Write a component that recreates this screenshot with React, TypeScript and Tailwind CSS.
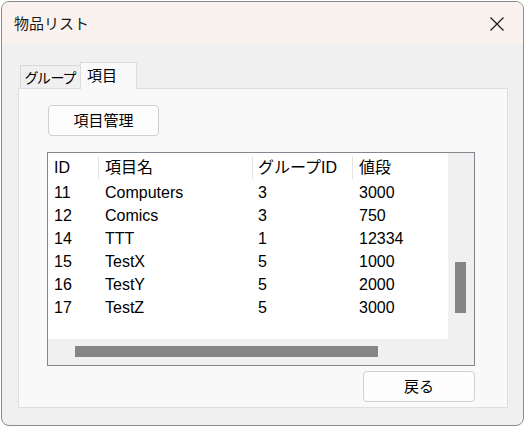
import React from 'react';

const rows = [
  { id: '11', name: 'Computers', group: '3', price: '3000' },
  { id: '12', name: 'Comics', group: '3', price: '750' },
  { id: '14', name: 'TTT', group: '1', price: '12334' },
  { id: '15', name: 'TestX', group: '5', price: '1000' },
  { id: '16', name: 'TestY', group: '5', price: '2000' },
  { id: '17', name: 'TestZ', group: '5', price: '3000' },
];

function Sep({ show }: { show: boolean }) {
  return <div className={`w-px h-[23px] shrink-0 ${show ? 'bg-[#e5e5e5]' : ''}`} />;
}

function Row({ cells, header }: { cells: string[]; header?: boolean }) {
  return (
    <div className={`flex items-center ${header ? 'h-[27px]' : 'h-[23px]'} whitespace-nowrap`}>
      <div className="w-[50px] shrink-0 pl-[6px]">{cells[0]}</div>
      <Sep show={!!header} />
      <div className="w-[153px] shrink-0 pl-[6px]">{cells[1]}</div>
      <Sep show={!!header} />
      <div className="w-[99px] shrink-0 pl-[5px]">{cells[2]}</div>
      <Sep show={!!header} />
      <div className="w-[120px] shrink-0 pl-[6px]">{cells[3]}</div>
    </div>
  );
}

export default function App() {
  return (
    <div
      className="w-[526px] h-[427px] bg-white pt-px pl-px text-black"
      style={{ fontFamily: '"Liberation Sans", "Noto Sans CJK JP", sans-serif' }}
    >
      <div className="w-[523px] h-[425px] border border-[#8c8c8c] rounded-[8px] overflow-hidden flex flex-col bg-[#f0f0f0]">
        {/* title bar */}
        <div className="h-[42px] shrink-0 bg-[#faf2ee] flex items-center justify-between pl-[12px] pr-[18px]">
          <span className="text-[15px] text-[#1a1a1a] font-['Noto_Sans_CJK_JP',sans-serif]">物品リスト</span>
          <svg width="16" height="16" viewBox="0 0 16 16" className="mt-[1px]">
            <path d="M1.5 1.5 L14.5 14.5 M14.5 1.5 L1.5 14.5" stroke="#1a1a1a" strokeWidth="1.2" fill="none" />
          </svg>
        </div>

        {/* body */}
        <div className="flex-1 flex flex-col pt-[18px] px-[16px] pb-[17px]">
          <div className="h-[26px] flex items-end shrink-0 font-['Noto_Sans_CJK_JP',sans-serif]">
            <div className="ml-[2px] w-[60px] h-[23px] border-t border-l border-[#d9d9d9] flex items-center justify-center text-[14px] [font-feature-settings:'palt']">
              グループ
            </div>
            <div className="relative z-10 -mb-px w-[57px] h-[27px] border border-b-0 border-[#dcdcdc] bg-[#f9f9f9] flex items-start pt-[1px] pl-[6px] text-[15px]">
              項目
            </div>
          </div>

          <div className="flex-1 w-[490px] border border-[#dfdfdf] bg-[#f9f9f9] pl-[28px] pt-[16px]">
            <div className="w-[428px] flex flex-col">
              <button className="ml-px w-[111px] h-[31px] border border-[#d0d0d0] rounded-[4px] bg-[#fdfdfd] text-[15px] font-['Noto_Sans_CJK_JP',sans-serif]">
                項目管理
              </button>

              <div className="mt-[16px] h-[214px] border border-[#828790] bg-white flex flex-col text-[16px]">
                <div className="flex h-[186px]">
                  <div className="flex-1 overflow-hidden pt-px">
                    <Row header cells={['ID', '項目名', 'グループID', '値段']} />
                    {rows.map(r => (
                      <Row key={r.id} cells={[r.id, r.name, r.group, r.price]} />
                    ))}
                  </div>
                  <div className="w-[26px] bg-[#f0f0f0] pt-[109px] pl-[7px]">
                    <div className="w-[11px] h-[51px] bg-[#858585]" />
                  </div>
                </div>
                <div className="h-[26px] flex bg-[#f0f0f0]">
                  <div className="flex-1 pt-[7px] pl-[27px]">
                    <div className="w-[303px] h-[11px] bg-[#858585]" />
                  </div>
                  <div className="w-[26px]" />
                </div>
              </div>

              <button className="self-end mt-[5px] w-[112px] h-[31px] border border-[#d0d0d0] rounded-[4px] bg-[#fdfdfd] text-[15px] font-['Noto_Sans_CJK_JP',sans-serif]">
                戻る
              </button>
            </div>
          </div>
        </div>
      </div>
    </div>
  );
}
